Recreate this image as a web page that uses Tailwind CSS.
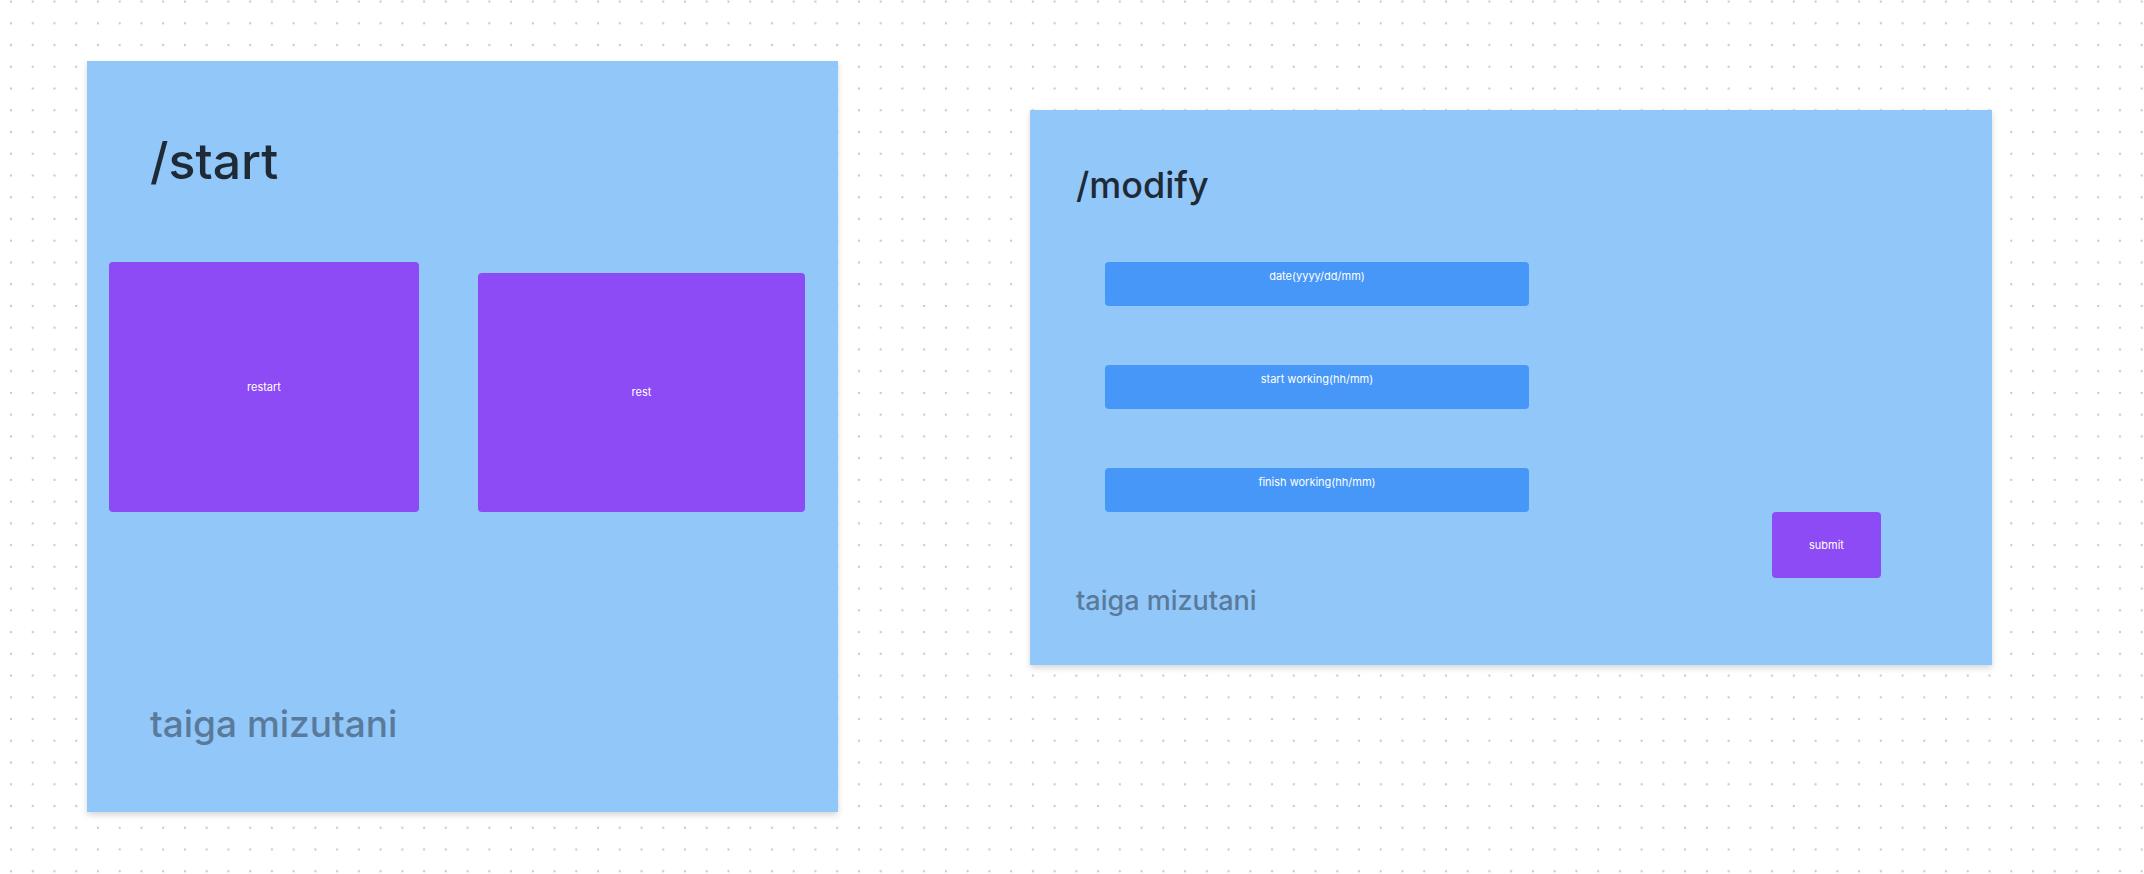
<!DOCTYPE html>
<html lang="en">
<head>
<meta charset="utf-8">
<meta name="viewport" content="width=device-width, initial-scale=1">
<title>Board</title>
<script src="https://cdn.jsdelivr.net/npm/@tailwindcss/browser@4"></script>
</head>
<body class="relative isolate min-h-screen bg-white font-['Inter',sans-serif] text-[#1e2a35]">
  <!-- Dotted canvas grid -->
  <svg class="absolute inset-0 -z-10 h-full w-full" aria-hidden="true">
    <defs>
      <pattern id="dots" x="0.13" y="-9.27" width="21.742" height="21.742" patternUnits="userSpaceOnUse">
        <circle cx="10.87" cy="10.87" r="1.15" fill="#c8c8c8"/>
      </pattern>
    </defs>
    <rect width="100%" height="100%" fill="url(#dots)"/>
  </svg>

  <main class="flex items-start gap-48 pt-[61px] pr-[152px] pb-8 pl-[87px]">
    <section class="min-w-0 flex-[751] bg-[#92c7fa] pt-[68px] pb-16 shadow-[0_3px_6px_rgba(0,0,0,0.16)]">
      <h1 class="pl-[63px] text-[50px] leading-16 font-medium">/start</h1>
      <div class="mt-[69px] flex items-end gap-[59px] pr-[33px] pl-[22px] text-[11px] text-white">
        <button type="button" class="h-[250px] flex-[310] rounded-sm bg-[#8d4bf6]">restart</button>
        <button type="button" class="h-[239px] flex-[327] rounded-sm bg-[#8d4bf6]">rest</button>
      </div>
      <p class="mt-[188px] pl-[63px] text-[37px] leading-12 font-medium text-[#5a7a9a]">taiga mizutani</p>
    </section>

    <section class="mt-[49px] min-w-0 flex-[962] bg-[#92c7fa] pt-[51px] pb-[44px] shadow-[0_3px_6px_rgba(0,0,0,0.16)]">
      <h1 class="pl-[46px] text-[36px] leading-12 font-medium">/modify</h1>
      <form class="mt-[53px] flex gap-[243px] pr-[111px] pl-[75px] text-[11px] leading-4 text-white">
        <div class="flex min-w-0 flex-[424] flex-col gap-[59px] pb-[66px]">
          <input type="text" aria-label="date" placeholder="date(yyyy/dd/mm)" class="h-11 w-full rounded-sm bg-[#4697f8] pt-1 pb-5 text-center placeholder:text-white">
          <input type="text" aria-label="start working" placeholder="start working(hh/mm)" class="h-11 w-full rounded-sm bg-[#4697f8] pt-1 pb-5 text-center placeholder:text-white">
          <input type="text" aria-label="finish working" placeholder="finish working(hh/mm)" class="h-11 w-full rounded-sm bg-[#4697f8] pt-1 pb-5 text-center placeholder:text-white">
        </div>
        <button type="submit" class="h-[66px] flex-[109] self-end rounded-sm bg-[#8d4bf6]">submit</button>
      </form>
      <p class="mt-[3px] pl-[46px] text-[27px] leading-10 font-medium text-[#5a7a9a]">taiga mizutani</p>
    </section>
  </main>
</body>
</html>
